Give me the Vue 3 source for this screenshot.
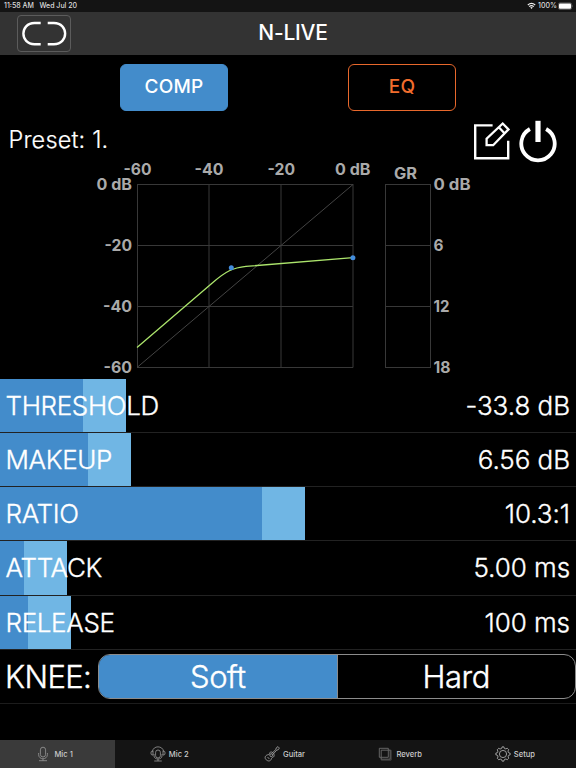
<script setup>
    import { ref } from 'vue';

    const xLabels = [
        {text: '-60', x: 123.5, w: 28},
        {text: '-40', x: 194.5, w: 29},
        {text: '-20', x: 267.5, w: 27.5},
        {text: '0 dB', x: 335, w: 35.5},
    ]
    const yLabels = [
        {text: '0 dB', x: 96.5, y: 189.5, w: 35.5},
        {text: '-20', x: 104.5, y: 250.8, w: 27.5},
        {text: '-40', x: 103, y: 312, w: 29},
        {text: '-60', x: 103.5, y: 373, w: 28.5},
    ]
    const grLabels = [
        {text: 'GR', x: 394, y: 179, w: 23},
        {text: '0 dB', x: 433.5, y: 190, w: 37},
        {text: '6', x: 433.5, y: 251, w: 10},
        {text: '12', x: 433.5, y: 312, w: 16},
        {text: '18', x: 433.5, y: 373, w: 17},
    ]

    const params = [
        {name: 'THRESHOLD', value: '-33.8 dB', fill: 82.5},
        {name: 'MAKEUP', value: '6.56 dB', fill: 87.5},
        {name: 'RATIO', value: '10.3:1', fill: 262},
        {name: 'ATTACK', value: '5.00 ms', fill: 24},
        {name: 'RELEASE', value: '100 ms', fill: 28},
    ]

    const tabs = ['Mic 1', 'Mic 2', 'Guitar', 'Reverb', 'Setup']
    let activeTab = ref('Mic 1')
    let mode = ref('COMP')
    let knee = ref('Soft')
</script>

<template>
    <div class="app">
        <div class="status">
            <span class="time">11:58 AM</span>
            <span>Wed Jul 20</span>
            <svg class="wifi" width="9" height="8" viewBox="0 0 9 8">
                <path d="M.8 3Q4.5 -.2 8.2 3M2.2 4.6Q4.5 2.6 6.8 4.6" fill="none" stroke="#eee" stroke-width="1.2" />
                <path d="M3.2 5.6Q4.5 4.6 5.8 5.6L4.5 7Z" fill="#eee" />
            </svg>
            <span class="percent">100%</span>
            <svg width="15" height="8" viewBox="0 0 15 8">
                <rect x=".4" y=".9" width="13.2" height="6.4" rx="1.6" fill="none" stroke="#777" stroke-width=".7" />
                <rect x="1" y="1.5" width="12" height="5.2" rx="1" fill="#fff" />
                <path d="M14.2 3V5.2Q15.2 4.1 14.2 3" fill="#777" />
            </svg>
        </div>

        <header class="header">
            <button class="linkButton">
                <svg width="52" height="35" viewBox="0 0 52 35">
                    <path d="M22.7 7H16.5C1.7 7 1.7 28.2 16.5 28.2H22.7M29.7 7H35.9C50.9 7 50.9 28.2 35.9 28.2H29.7" fill="none" stroke="#fff" stroke-width="2.4" />
                </svg>
            </button>
            <h1>N-LIVE</h1>
        </header>

        <div class="modes">
            <button :class="['mode', mode === 'COMP' ? 'on' : '']" @click="mode = 'COMP'">COMP</button>
            <button :class="['mode', 'eq', mode === 'EQ' ? 'on' : '']" @click="mode = 'EQ'">EQ</button>
        </div>

        <div class="preset">
            <p>Preset: 1.</p>
            <svg width="38" height="40" viewBox="0 0 38 40">
                <path d="M19.6 5.4H2.2V38.2H35.2V20.7" fill="none" stroke="#fff" stroke-width="2.4" />
                <path d="M13.6 25.2V18.7L29.7 3.5L35.5 9.4L20.2 25.2ZM25.8 7.2L31.5 13.2" fill="none" stroke="#fff" stroke-width="2.3" />
            </svg>
            <svg class="power" width="38" height="44" viewBox="0 0 38 44">
                <path d="M10.9 9A16.7 16.7 0 1 0 27.1 9" fill="none" stroke="#fff" stroke-width="3.8" />
                <path d="M19 .8V22" stroke="#fff" stroke-width="5.2" />
            </svg>
        </div>

        <svg class="chart" width="576" height="217" viewBox="0 161 576 217">
            <g fill="none" stroke="#383838">
                <path d="M137.5 184V367.5M209 184V367.5M281 184V367.5M353 184V367.5M385.5 184V367.5M430.5 184V367.5" />
                <path d="M137 184.5H353M137 245.5H353M137 306.5H353M137 367.5H353" />
                <path d="M385 184.5H431M385 245.5H431M385 306.5H431M385 367.5H431" />
                <path d="M137 367.5L353 184.5" stroke="#444" />
            </g>
            <path d="M137 347.6L212 283.2C226 271 233 267.8 246 266.4L353 257.7" fill="none" stroke="#ace56c" stroke-width="1.3" />
            <circle cx="231.3" cy="267.7" r="2.5" fill="#438cdc" />
            <circle cx="352.9" cy="257.7" r="2.5" fill="#438cdc" />
            <g class="labels">
                <text v-for="l in xLabels" :key="l.text" :x="l.x" y="175" :textLength="l.w" lengthAdjust="spacingAndGlyphs">{{l.text}}</text>
                <text v-for="l in yLabels" :key="l.text" :x="l.x" :y="l.y" :textLength="l.w" lengthAdjust="spacingAndGlyphs">{{l.text}}</text>
                <text v-for="l in grLabels" :key="l.text" :x="l.x" :y="l.y" :textLength="l.w" lengthAdjust="spacingAndGlyphs">{{l.text}}</text>
            </g>
        </svg>

        <ul class="params">
            <li v-for="p in params" :key="p.name">
                <div class="fill" :style="{width: p.fill + 43 + 'px'}"></div>
                <span class="name">{{p.name}}</span>
                <span class="value">{{p.value}}</span>
            </li>
        </ul>

        <div class="knee">
            <span class="kneeLabel">KNEE:</span>
            <div class="segments">
                <button v-for="k in ['Soft', 'Hard']" :key="k" :class="knee === k ? 'on' : ''" @click="knee = k">{{k}}</button>
            </div>
        </div>

        <nav class="tabs">
            <button v-for="tab in tabs" :key="tab" :class="activeTab === tab ? 'active' : ''" @click="activeTab = tab">
                <svg width="16" height="16" viewBox="0 0 16 16" fill="none" stroke="#999" stroke-width=".8">
                    <g v-if="tab === 'Mic 1'">
                        <rect x="5.4" y="1.2" width="5.2" height="9.8" rx="2.6" />
                        <path d="M3.6 7V8.5C3.6 14.2 12.4 14.2 12.4 8.5V7M8 12.8V14.6M4 14.7H12" />
                    </g>
                    <g v-else-if="tab === 'Mic 2'">
                        <rect x="5.6" y="4" width="4.8" height="8" rx="2.4" />
                        <path d="M4 8V10C4 14 12 14 12 10V8M8 13V15M4.2 15H11.8M2.5 5.5C3 -.7 13 -.7 13.5 5.5M3 5H2C.6 5 .6 9 2 9H3ZM13 5H14C15.4 5 15.4 9 14 9H13Z" />
                    </g>
                    <g v-else-if="tab === 'Guitar'" stroke="#aaa">
                        <path d="M9 6.9C7.5 5.2 5.4 6 5.5 7.8C5.5 8.7 3.9 8.4 2.5 9.3C.3 10.8 1 13.2 2.8 14.2C4.6 15.7 7 14.8 7.4 12.7C7.6 11.2 9.5 11.7 10 10.2C10.4 9 10 7.7 9 6.9Z" />
                        <circle cx="7.2" cy="9.2" r="1.4" />
                        <path d="M7.8 7.6L12 3.2L12.1 2L14 .6L15.4 2.1L13.9 4L12.8 4L8.7 8.7M3.5 11L5.4 13" />
                    </g>
                    <g v-else-if="tab === 'Reverb'" stroke="#777">
                        <path d="M2.3 2.3H11.3V11.3H2.3ZM4.2 4.2H13.2V13.2H4.2Z" />
                        <path d="M11.3 4.2H14.1V14.1H4.2V11.3" stroke="#555" />
                    </g>
                    <g v-else stroke="#bbb">
                        <circle cx="8" cy="8" r="3.6" />
                        <path d="M6.2 2.8Q7 2.5 7 .9H9Q9 2.5 9.8 2.8T12.3 2.3L13.7 3.7Q12.6 5 13.2 6.2T15.1 7V9Q13.5 9 13.2 9.8T13.7 12.3L12.3 13.7Q11 12.6 9.8 13.2T9 15.1H7Q7 13.5 6.2 13.2T3.7 13.7L2.3 12.3Q3.4 11 2.8 9.8T.9 9V7Q2.5 7 2.8 6.2T2.3 3.7L3.7 2.3Q5 3.4 6.2 2.8Z" />
                    </g>
                </svg>
                {{tab}}
            </button>
        </nav>
    </div>
</template>

<style>
    body {
        margin: 0;
        background-color: black;
    }
</style>

<style scoped>
    .app {
        display: flex;
        flex-direction: column;
        width: 576px;
        height: 768px;
        overflow: hidden;
        background-color: black;
        color: white;
        font-family: Inter, "Liberation Sans", sans-serif;
    }

    button {
        padding: 0;
        margin: 0;
        border: none;
        background: none;
        color: inherit;
        font-family: inherit;
        cursor: pointer;
    }

    .status {
        display: flex;
        align-items: center;
        box-sizing: border-box;
        height: 12px;
        padding: 0 3px 0 4px;
        background-color: #141414;
        color: #ddd;
        font-size: 7px;
        font-weight: 500;
        line-height: 12px;
    }

    .time {
        margin-right: 5.5px;
    }

    .wifi {
        margin-left: auto;
        margin-right: 2px;
    }

    .percent {
        margin-right: 1px;
    }

    .header {
        display: grid;
        grid-template-columns: 80px 1fr 70px;
        align-items: center;
        height: 43px;
        background-color: #333;
    }

    .linkButton {
        display: flex;
        box-sizing: border-box;
        width: 54px;
        height: 37px;
        margin-left: 17px;
        border: 1px solid #5c5c5c;
        border-radius: 4px;
    }

    h1 {
        margin: 0;
        text-align: center;
        font-size: 21px;
        line-height: 40px;
        padding-bottom: 2px;
        font-weight: 500;
        letter-spacing: -.2px;
    }

    .modes {
        display: flex;
        gap: 120px;
        padding: 8.5px 0 0 120px;
        height: 47px;
    }

    .mode {
        box-sizing: border-box;
        width: 108px;
        height: 47px;
        padding-bottom: 2px;
        border: 1px solid #438ccb;
        border-radius: 6px;
        font-size: 19px;
        font-weight: 500;
        letter-spacing: .2px;
    }

    .mode.on {
        background-color: #438ccb;
    }

    .mode.eq {
        border-color: #e8682c;
        color: #f26d2d;
    }

    .mode.eq.on {
        background-color: #e8682c;
        color: white;
    }

    .preset {
        display: flex;
        height: 50.5px;
        padding: 0 19px 0 8.5px;
    }

    .preset p {
        flex: 1;
        margin: 14.5px 0 0;
        font-size: 23.5px;
        line-height: 30px;
        font-weight: 300;
        letter-spacing: .15px;
        -webkit-text-stroke: .2px white;
    }

    .preset svg {
        margin-top: 9px;
    }

    .preset .power {
        margin-left: 8px;
    }

    .chart {
        display: block;
        flex: none;
    }

    .labels text {
        fill: #aaa;
        font-size: 15.5px;
        font-weight: 700;
    }

    .params {
        margin: 0;
        padding: .5px 0 0;
        list-style: none;
    }

    .params li {
        display: flex;
        justify-content: space-between;
        position: relative;
        box-sizing: border-box;
        height: 54.25px;
        padding: 0 6px 0 5.5px;
        border-bottom: 1px solid #222;
        font-size: 26px;
        line-height: 54px;
        font-weight: 300;
        -webkit-text-stroke: .35px white;
    }

    .params span {
        position: relative;
    }

    .params .name {
        letter-spacing: -.35px;
    }

    .params .value {
        letter-spacing: -.05px;
    }

    /* level bar with its lighter drag handle at the right end */
    .fill {
        position: absolute;
        left: 0;
        top: 0;
        bottom: 0;
        box-sizing: border-box;
        background-color: #438ccb;
        border-right: 43px solid #70b6e4;
    }

    .knee {
        display: flex;
        align-items: center;
        box-sizing: border-box;
        height: 54.5px;
        padding-left: 5px;
        border-bottom: 1px solid #1c1c1c;
        font-size: 31px;
        font-weight: 300;
        -webkit-text-stroke: .4px white;
    }

    .kneeLabel {
        width: 93px;
        white-space: nowrap;
        letter-spacing: -.6px;
    }

    .segments {
        display: flex;
        flex: 1;
        box-sizing: border-box;
        height: 45px;
        border: 1px solid #8c8c8c;
        border-radius: 12px;
        overflow: hidden;
    }

    .segments button {
        flex: 1;
        font-size: 31px;
        font-weight: 300;
        letter-spacing: -.4px;
    }

    .segments button.on {
        background-color: #438ccb;
    }

    .segments button + button {
        border-left: 1px solid #8c8c8c;
    }

    .tabs {
        display: flex;
        height: 28px;
        margin-top: auto;
        background-color: #141414;
    }

    .tabs button {
        display: flex;
        flex: 1;
        justify-content: center;
        align-items: center;
        gap: 3px;
        padding-right: 7px;
        color: #ccc;
        font-size: 7.6px;
        font-weight: 500;
    }

    .tabs button.active {
        background-color: #3a3a3a;
    }
</style>
